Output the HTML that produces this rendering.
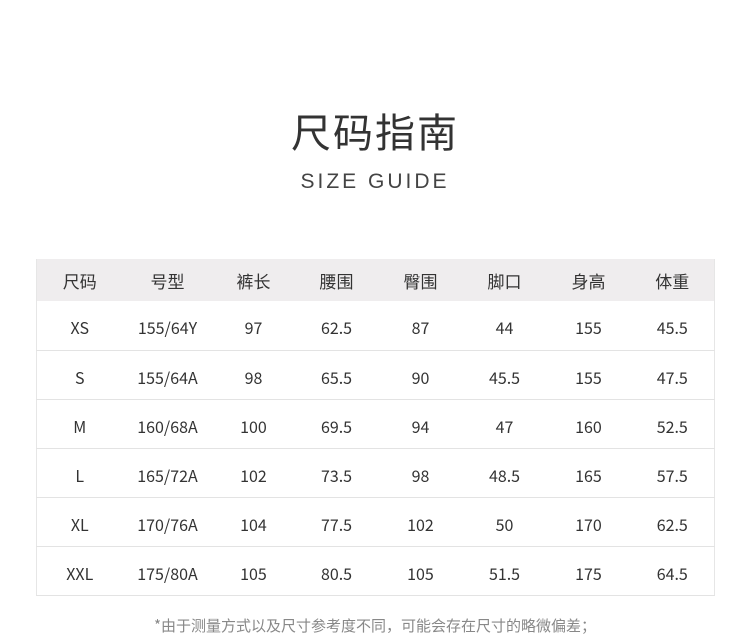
<!DOCTYPE html>
<html><head><meta charset="utf-8"><style>
body{margin:0;width:750px;height:634px;background:#fff;font-family:"Noto Sans CJK SC","Liberation Sans",sans-serif;color:#333;position:relative;overflow:hidden}
.t1{position:absolute;top:104px;left:0;width:750px;text-align:center;font-size:40px;color:#333;letter-spacing:2px;line-height:52px}
.t2{position:absolute;top:169px;left:0;width:750px;text-align:center;font-family:"Liberation Sans",sans-serif;font-size:21px;color:#444;letter-spacing:3px;line-height:26px}
table{position:absolute;left:36px;top:259px;width:678px;border-collapse:collapse;table-layout:fixed;border:1px solid #e6e6e6;border-top:none}
td{text-align:center;font-size:16px;color:#333;height:49px;border-bottom:1px solid #e3e3e3;padding:4px 0 0 0;box-sizing:border-box}
tr.h td{background:#efedee;height:42px;border-bottom:none;font-size:17px;padding-top:0}
.n{position:absolute;top:614px;left:0;width:750px;text-align:center;font-size:15px;color:#888;line-height:24px}
</style></head><body>
<div class="t1">尺码指南</div>
<div class="t2">SIZE GUIDE</div>
<table>
<colgroup><col style="width:86px"><col style="width:90px"><col style="width:82px"><col style="width:84px"><col style="width:84px"><col style="width:84px"><col style="width:84px"><col style="width:84px"></colgroup>
<tr class="h"><td>尺码</td><td>号型</td><td>裤长</td><td>腰围</td><td>臀围</td><td>脚口</td><td>身高</td><td>体重</td></tr>
<tr><td>XS</td><td>155/64Y</td><td>97</td><td>62.5</td><td>87</td><td>44</td><td>155</td><td>45.5</td></tr>
<tr><td>S</td><td>155/64A</td><td>98</td><td>65.5</td><td>90</td><td>45.5</td><td>155</td><td>47.5</td></tr>
<tr><td>M</td><td>160/68A</td><td>100</td><td>69.5</td><td>94</td><td>47</td><td>160</td><td>52.5</td></tr>
<tr><td>L</td><td>165/72A</td><td>102</td><td>73.5</td><td>98</td><td>48.5</td><td>165</td><td>57.5</td></tr>
<tr><td>XL</td><td>170/76A</td><td>104</td><td>77.5</td><td>102</td><td>50</td><td>170</td><td>62.5</td></tr>
<tr><td>XXL</td><td>175/80A</td><td>105</td><td>80.5</td><td>105</td><td>51.5</td><td>175</td><td>64.5</td></tr>
</table>
<div class="n">*由于测量方式以及尺寸参考度不同，可能会存在尺寸的略微偏差；</div>
</body></html>
